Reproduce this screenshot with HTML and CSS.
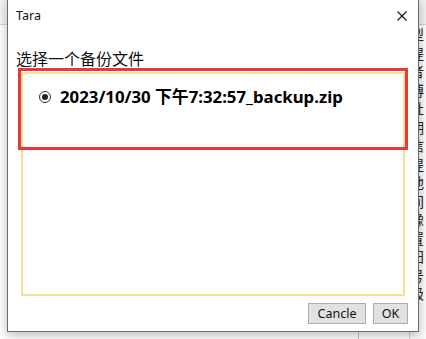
FILE: index.html
```html
<!DOCTYPE html>
<html lang="zh">
<head>
<meta charset="utf-8">
<title>Tara</title>
<link rel="stylesheet" href="styles.css">
</head>
<body>
<div class="app">
  <div class="app-left">
    <div class="toolbar"></div>
    <div class="app-bottom"><div class="split"></div></div>
  </div>
  <div class="app-list">
    <div class="list-head"></div>
    <div class="list-row">型</div>
    <div class="list-row">提</div>
    <div class="list-row">者</div>
    <div class="list-row">博</div>
    <div class="list-row">社</div>
    <div class="list-row">期</div>
    <div class="list-row">信</div>
    <div class="list-row">提</div>
    <div class="list-row">地</div>
    <div class="list-row">间</div>
    <div class="list-row">豫</div>
    <div class="list-row">置</div>
    <div class="list-row">阳</div>
    <div class="list-row">号</div>
    <div class="list-row">极</div>
  </div>
</div>

<div class="dialog">
  <div class="titlebar">
    <span class="title">Tara</span>
    <svg class="close" width="10" height="10" viewBox="0 0 10 10"><path d="M0.5 0.5L9.5 9.5M9.5 0.5L0.5 9.5" stroke="#111" stroke-width="1.1" fill="none"/></svg>
  </div>
  <div class="body">
    <div class="label">选择一个备份文件</div>
    <div class="filebox">
      <div class="highlight"></div>
      <label class="item">
        <span class="radio"><span class="dot"></span></span>
        <span class="fname">2023/10/30 下午7:32:57_backup.zip</span>
      </label>
    </div>
    <div class="buttons">
      <button class="btn btn-cancel">Cancle</button>
      <button class="btn btn-ok">OK</button>
    </div>
  </div>
</div>
</body>
</html>
```
FILE: styles.css
```css
html, body {
  margin: 0;
  padding: 0;
}
body {
  width: 426px;
  height: 339px;
  overflow: hidden;
  position: relative;
  background: #ffffff;
  font-family: "Noto Sans", "Noto Sans CJK SC", sans-serif;
}
.app {
  display: flex;
  height: 339px;
}
.app-left {
  flex: 1;
  display: flex;
  flex-direction: column;
}
.toolbar {
  height: 24px;
  background: #f3f3f3;
  border-bottom: 1px solid #d6d6d6;
}
.app-bottom {
  flex: 1;
  display: flex;
  justify-content: flex-end;
  padding-right: 50px;
}
.split {
  width: 1px;
  background: #c8c8c8;
}
.app-list {
  width: 16px;
  display: flex;
  flex-direction: column;
  background: #fbfbfb;
  border-left: 1px solid #cfcfcf;
}
.list-head {
  height: 24px;
  background: #f0f0f0;
  border-bottom: 1px solid #d0d0d0;
}
.list-row {
  height: 18.5px;
  line-height: 18.5px;
  font-size: 14px;
  white-space: nowrap;
  color: #222;
  font-family: "Noto Sans CJK SC", sans-serif;
}

.dialog {
  position: absolute;
  left: 7px;
  top: -1px;
  width: 410px;
  height: 331px;
  background: #ffffff;
  border: 1px solid #6c6c6c;
  box-shadow: 0 3px 10px rgba(0, 0, 0, 0.28);
  display: flex;
  flex-direction: column;
}
.titlebar {
  height: 31px;
  display: flex;
  align-items: center;
  justify-content: space-between;
  padding: 0 11px 0 8px;
}
.title {
  font-size: 12.5px;
  color: #111;
  font-family: "Noto Sans", sans-serif;
}
.close {
  display: block;
}
.body {
  flex: 1;
  display: flex;
  flex-direction: column;
  padding: 16px 13px 0 13px;
}
.label {
  font-size: 16px;
  line-height: 22px;
  color: #111;
  font-family: "Noto Sans CJK SC", sans-serif;
  margin-left: -5px;
}
.filebox {
  position: relative;
  margin-top: 3px;
  height: 224px;
  box-sizing: border-box;
  border: 2px solid #f3e28f;
  padding: 13px 0 0 16px;
}
.highlight {
  position: absolute;
  left: -5px;
  top: -6px;
  width: 390px;
  height: 82px;
  box-sizing: border-box;
  border: 3px solid #e8393a;
}
.item {
  display: flex;
  align-items: center;
  gap: 9px;
}
.radio {
  width: 12px;
  height: 12px;
  box-sizing: border-box;
  border: 1px solid #333;
  border-radius: 50%;
  display: flex;
  align-items: center;
  justify-content: center;
  flex: none;
}
.dot {
  width: 6px;
  height: 6px;
  border-radius: 50%;
  background: #222;
}
.fname {
  font-size: 16.8px;
  font-weight: bold;
  color: #000;
  font-family: "Noto Sans", "Noto Sans CJK SC", sans-serif;
  line-height: 20px;
}
.buttons {
  display: flex;
  justify-content: flex-end;
  gap: 7px;
  margin-top: 7px;
  margin-right: -3px;
}
.btn {
  height: 21px;
  box-sizing: border-box;
  background: #e1e1e1;
  border: 1px solid #adadad;
  font-size: 12.5px;
  font-family: "Noto Sans", sans-serif;
  color: #111;
  padding: 0;
  line-height: 18px;
}
.btn-cancel {
  width: 58px;
}
.btn-ok {
  width: 35px;
}
```
